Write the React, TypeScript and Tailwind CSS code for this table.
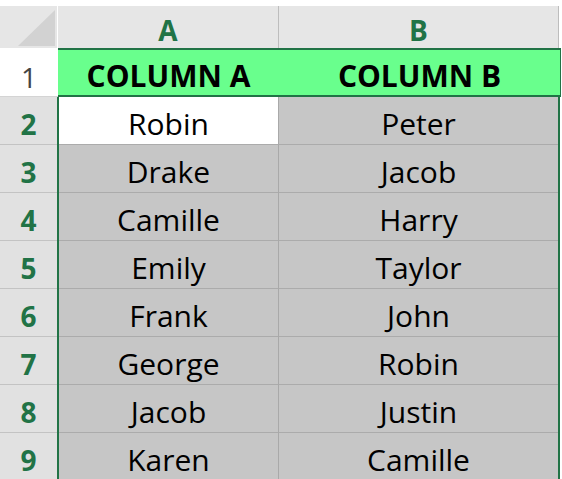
import React from 'react';

const rows: [number, string, string][] = [
  [2, 'Robin', 'Peter'],
  [3, 'Drake', 'Jacob'],
  [4, 'Camille', 'Harry'],
  [5, 'Emily', 'Taylor'],
  [6, 'Frank', 'John'],
  [7, 'George', 'Robin'],
  [8, 'Jacob', 'Justin'],
  [9, 'Karen', 'Camille'],
];

const font = { fontFamily: '"Open Sans", "Liberation Sans", sans-serif' };

export default function App() {
  return (
    <div className="w-[562px] h-[479px] overflow-hidden bg-white pt-[6px] text-[30px] leading-[36px] text-black" style={font}>
      {/* column headers */}
      <div className="flex h-[42px]">
        <div className="relative w-[57px] shrink-0 bg-[#e6e6e6]">
          <svg className="absolute right-[2px] bottom-[2px]" width="37" height="36" viewBox="0 0 37 36">
            <polygon points="37,0 37,36 0,36" fill="#d2d2d2" />
          </svg>
        </div>
        <div className="w-px shrink-0 bg-white" />
        <div className="flex w-[221px] shrink-0 items-end justify-center border-r border-[#bdbdbd] bg-[#e6e6e6] text-[28px] font-bold text-[#217346]">
          A
        </div>
        <div className="flex w-[280px] shrink-0 items-end justify-center border-r border-[#bdbdbd] bg-[#e6e6e6] text-[28px] font-bold text-[#217346]">
          B
        </div>
      </div>

      {/* row 1 */}
      <div className="flex h-[49px]">
        <div className="flex w-[58px] shrink-0 items-end justify-center border-b border-[#d4d4d4] bg-white pb-[1px] text-[28px] text-[#444]">
          1
        </div>
        <div className="flex w-[503px] shrink-0 flex-col border-r border-[#217346]">
          <div className="h-[2px] bg-[#217346]" />
          <div className="flex flex-1 items-end bg-[#69ff8d] pb-[1px] font-bold">
            <div className="flex w-[221px] justify-center">COLUMN A</div>
            <div className="flex w-[281px] justify-center">COLUMN B</div>
          </div>
          <div className="h-[2px] bg-[#217346]" />
        </div>
      </div>

      {/* selected rows */}
      <div className="flex">
        <div className="flex w-[57px] shrink-0 flex-col bg-[#e1e1e1]">
          {rows.map(([n]) => (
            <div key={n} className="flex h-[48px] shrink-0 items-end justify-center border-b border-[#c3c3c3] pb-[2px] text-[28px] font-bold text-[#217346]">
              {n}
            </div>
          ))}
        </div>
        <div className="flex w-[503px] shrink-0 border-x-2 border-[#217346]">
          <div className="flex w-[220px] shrink-0 flex-col border-r border-[#a9a9a9] bg-[#c6c6c6]">
            {rows.map(([n, a]) => (
              <div
                key={n}
                className={`flex h-[48px] shrink-0 items-end justify-center border-b border-[#ababab] pb-[2px] ${n === 2 ? 'bg-white' : ''}`}
              >
                {a}
              </div>
            ))}
          </div>
          <div className="flex flex-1 flex-col bg-[#c6c6c6]">
            {rows.map(([n, , b]) => (
              <div key={n} className="flex h-[48px] shrink-0 items-end justify-center border-b border-[#ababab] pb-[2px]">
                {b}
              </div>
            ))}
          </div>
        </div>
      </div>
    </div>
  );
}
